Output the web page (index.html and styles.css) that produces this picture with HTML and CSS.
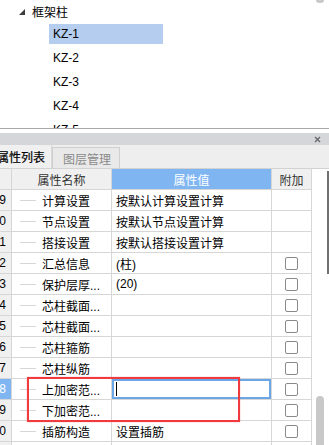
FILE: index.html
```html
<!doctype html>
<html lang="zh-CN">
<head>
	<meta charset="utf-8" />
	<title>
		属性列表
	</title>

	<link rel="stylesheet" href="styles.css">
</head>
<body>

	<!-- BEGIN: Tree. -->
	<section class="tree">
		<div class="tree__root">
			<svg class="tree__arrow" width="6" height="6" viewBox="0 0 6 6">
				<polygon points="6,0 6,6 0,6" fill="#3c3c3c" />
			</svg>
			框架柱
		</div>
		<ul class="tree__list">
			<li class="tree__item tree__item--selected">KZ-1</li>
			<li class="tree__item">KZ-2</li>
			<li class="tree__item">KZ-3</li>
			<li class="tree__item">KZ-4</li>
			<li class="tree__item">KZ-5</li>
		</ul>
		<span class="tree__thumb"></span>
	</section>
	<!-- END: Tree. -->

	<div class="splitter"></div>

	<div class="panel-title">
		<svg width="7" height="7" viewBox="0 0 7 7">
			<path d="M1 1 L6 6 M6 1 L1 6" stroke="#6a6a6a" stroke-width="1.4" />
		</svg>
	</div>

	<div class="tabs">
		<div class="tabs__tab tabs__tab--active">属性列表</div>
		<div class="tabs__tab">图层管理</div>
	</div>

	<!-- BEGIN: Grid. -->
	<section class="grid">
		<div class="grid__table">

			<div class="row row--head">
				<div class="cell cell--num"></div>
				<div class="cell cell--name">属性名称</div>
				<div class="cell cell--value">属性值</div>
				<div class="cell cell--add">附加</div>
			</div>

			<div class="row">
				<div class="cell cell--num">9</div>
				<div class="cell cell--name">计算设置</div>
				<div class="cell cell--value">按默认计算设置计算</div>
				<div class="cell cell--add"></div>
			</div>
			<div class="row">
				<div class="cell cell--num">10</div>
				<div class="cell cell--name">节点设置</div>
				<div class="cell cell--value">按默认节点设置计算</div>
				<div class="cell cell--add"></div>
			</div>
			<div class="row">
				<div class="cell cell--num">11</div>
				<div class="cell cell--name">搭接设置</div>
				<div class="cell cell--value">按默认搭接设置计算</div>
				<div class="cell cell--add"></div>
			</div>
			<div class="row">
				<div class="cell cell--num">12</div>
				<div class="cell cell--name">汇总信息</div>
				<div class="cell cell--value">(柱)</div>
				<div class="cell cell--add"><span class="check"></span></div>
			</div>
			<div class="row">
				<div class="cell cell--num">13</div>
				<div class="cell cell--name">保护层厚...</div>
				<div class="cell cell--value">(20)</div>
				<div class="cell cell--add"><span class="check"></span></div>
			</div>
			<div class="row">
				<div class="cell cell--num">14</div>
				<div class="cell cell--name">芯柱截面...</div>
				<div class="cell cell--value"></div>
				<div class="cell cell--add"><span class="check"></span></div>
			</div>
			<div class="row">
				<div class="cell cell--num">15</div>
				<div class="cell cell--name">芯柱截面...</div>
				<div class="cell cell--value"></div>
				<div class="cell cell--add"><span class="check"></span></div>
			</div>
			<div class="row">
				<div class="cell cell--num">16</div>
				<div class="cell cell--name">芯柱箍筋</div>
				<div class="cell cell--value"></div>
				<div class="cell cell--add"><span class="check"></span></div>
			</div>
			<div class="row">
				<div class="cell cell--num">17</div>
				<div class="cell cell--name">芯柱纵筋</div>
				<div class="cell cell--value"></div>
				<div class="cell cell--add"><span class="check"></span></div>
			</div>
			<div class="row row--selected">
				<div class="cell cell--num">18</div>
				<div class="cell cell--name">上加密范...</div>
				<div class="cell cell--value cell--editing"><span class="cursor"></span></div>
				<div class="cell cell--add"><span class="check"></span></div>
			</div>
			<div class="row">
				<div class="cell cell--num">19</div>
				<div class="cell cell--name">下加密范...</div>
				<div class="cell cell--value"></div>
				<div class="cell cell--add"><span class="check"></span></div>
			</div>
			<div class="row">
				<div class="cell cell--num">20</div>
				<div class="cell cell--name">插筋构造</div>
				<div class="cell cell--value">设置插筋</div>
				<div class="cell cell--add"><span class="check"></span></div>
			</div>
			<div class="row">
				<div class="cell cell--num">21</div>
				<div class="cell cell--name"></div>
				<div class="cell cell--value"></div>
				<div class="cell cell--add"><span class="check"></span></div>
			</div>

		</div>
		<div class="grid__scroll">
			<span class="grid__scroll-line"></span>
			<span class="grid__scroll-thumb"></span>
		</div>
	</section>
	<!-- END: Grid. -->

	<!-- Red marker drawn over the two edited rows. -->
	<div class="annotation"></div>

</body>
</html>
```

FILE: styles.css
```css
html {
	box-sizing: border-box ;
}

*, *:before, *:after {
	box-sizing: inherit ;
}

body {
	background-color: #ffffff ;
	color: #000000 ;
	font-family: "Liberation Sans", "Noto Sans CJK SC", sans-serif ;
	font-size: 12px ;
	height: 445px ;
	margin: 0px 0px 0px 0px ;
	overflow: hidden ;
	position: relative ;
	width: 329px ;
}

/* BEGIN: Tree. */
.tree {
	border-bottom: 1px solid #a8a8a8 ;
	height: 129px ;
	overflow: hidden ;
	position: relative ;
}

.tree__root {
	align-items: center ;
	display: flex ;
	height: 22px ;
	padding: 0px 0px 0px 19px ;
}

.tree__arrow {
	margin: 1px 7px 0px 0px ;
}

.tree__list {
	list-style: none ;
	margin: 2px 0px 0px 49px ;
	padding: 0px 0px 0px 0px ;
}

.tree__item {
	height: 20px ;
	line-height: 20px ;
	margin: 0px 0px 4px 0px ;
	padding: 0px 0px 0px 4px ;
	width: 114px ;
}

.tree__item--selected {
	background-color: #b5cdee ;
}

.tree__thumb {
	background-color: #c9c9c9 ;
	border-radius: 0px 0px 4px 4px ;
	height: 3px ;
	position: absolute ;
	right: 5px ;
	top: 0px ;
	width: 8px ;
}
/* END: Tree. */

.splitter {
	height: 4px ;
}

.panel-title {
	align-items: center ;
	background-color: #d5d6da ;
	display: flex ;
	height: 12px ;
	justify-content: flex-end ;
	padding: 0px 8px 0px 0px ;
}

/* BEGIN: Tabs. */
.tabs {
	align-items: flex-end ;
	background-color: #eeeeee ;
	border-bottom: 1px solid #d2d2d2 ;
	display: flex ;
	height: 24px ;
}

.tabs__tab {
	align-items: center ;
	background-color: #e9e9e9 ;
	border: 1px solid #cfcfcf ;
	border-bottom: none ;
	color: #8a8a8a ;
	display: flex ;
	font-size: 12px ;
	height: 21px ;
	padding: 0px 8px 0px 10px ;
}

.tabs__tab--active {
	background-color: #f0f0f0 ;
	border: none ;
	border-right: 1px solid #d8d8d8 ;
	color: #000000 ;
	height: 23px ;
	margin: 0px 0px 0px -3px ;
	padding: 0px 6px 0px 0px ;
	-webkit-text-stroke: 0.2px #000000 ;
}
/* END: Tabs. */

/* BEGIN: Grid. */
.grid {
	display: flex ;
}

.grid__table {
	width: 312px ;
}

.row {
	display: flex ;
	height: 21px ;
}

.cell {
	align-items: center ;
	border-bottom: 1px solid #d6d6d6 ;
	border-right: 1px solid #d6d6d6 ;
	display: flex ;
	overflow: hidden ;
	white-space: nowrap ;
}

.cell--num {
	background-color: #f0f0f0 ;
	justify-content: flex-end ;
	padding: 0px 5px 0px 0px ;
	width: 12px ;
}

.cell--name {
	padding: 0px 0px 0px 30px ;
	position: relative ;
	width: 100px ;
}

.cell--name:before {
	background-color: #d6d6d6 ;
	content: "" ;
	height: 1px ;
	left: 8px ;
	position: absolute ;
	top: 10px ;
	width: 16px ;
}

.cell--value {
	padding: 0px 0px 0px 4px ;
	width: 160px ;
}

.cell--add {
	justify-content: center ;
	width: 40px ;
}

.row--head .cell {
	background-color: #f0f0f0 ;
	color: #333333 ;
	justify-content: center ;
	padding: 0px 0px 0px 0px ;
}

.row--head .cell--name:before {
	display: none ;
}

.row--head .cell--value {
	background-color: #7fb6f2 ;
	color: #ffffff ;
}

.row--selected .cell--num {
	background-color: #7fb6f2 ;
	color: #ffffff ;
}

.cell--editing {
	box-shadow: inset 0px 0px 0px 2px #6ba6e6 ;
}

.cursor {
	background-color: #000000 ;
	height: 14px ;
	width: 1px ;
}

.check {
	border: 1px solid #8a8a8a ;
	border-radius: 2px ;
	height: 13px ;
	width: 13px ;
}

.grid__scroll {
	flex: 1 1 auto ;
	height: 276px ;
	position: relative ;
}

.grid__scroll-line {
	background-color: #707070 ;
	height: 103px ;
	left: 15px ;
	position: absolute ;
	top: 2px ;
	width: 2px ;
}

.grid__scroll-thumb {
	background-color: #c8c8c8 ;
	border-radius: 4px 4px 0px 0px ;
	height: 60px ;
	left: 4px ;
	position: absolute ;
	top: 227px ;
	width: 8px ;
}
/* END: Grid. */

.annotation {
	border: 2px solid #ef3a3e ;
	box-shadow: 0px 0px 1px rgba( 239, 58, 62, 0.6 ) ;
	height: 45px ;
	left: 27px ;
	position: absolute ;
	top: 377px ;
	width: 213px ;
}
```
